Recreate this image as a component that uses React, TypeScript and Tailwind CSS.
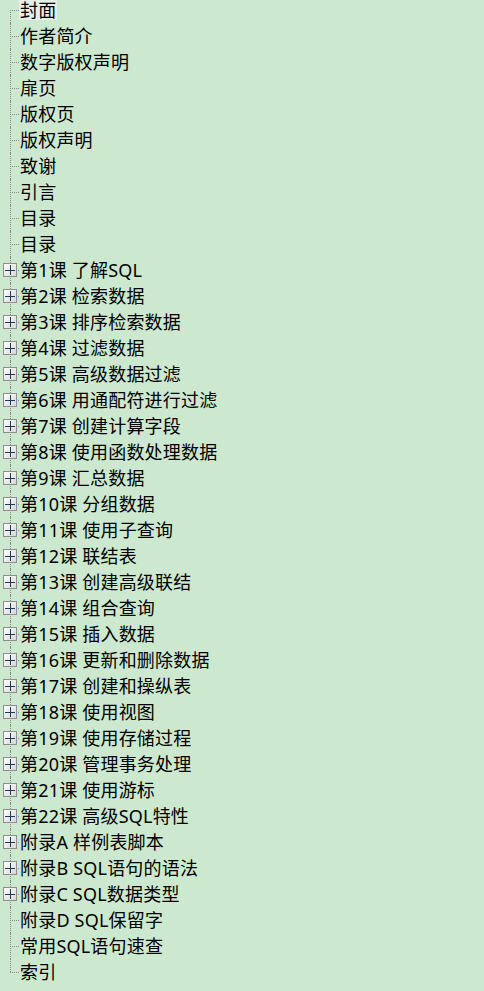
const items: { label: string; expandable?: boolean }[] = [
  { label: "封面" },
  { label: "作者简介" },
  { label: "数字版权声明" },
  { label: "扉页" },
  { label: "版权页" },
  { label: "版权声明" },
  { label: "致谢" },
  { label: "引言" },
  { label: "目录" },
  { label: "目录" },
  { label: "第1课 了解SQL", expandable: true },
  { label: "第2课 检索数据", expandable: true },
  { label: "第3课 排序检索数据", expandable: true },
  { label: "第4课 过滤数据", expandable: true },
  { label: "第5课 高级数据过滤", expandable: true },
  { label: "第6课 用通配符进行过滤", expandable: true },
  { label: "第7课 创建计算字段", expandable: true },
  { label: "第8课 使用函数处理数据", expandable: true },
  { label: "第9课 汇总数据", expandable: true },
  { label: "第10课 分组数据", expandable: true },
  { label: "第11课 使用子查询", expandable: true },
  { label: "第12课 联结表", expandable: true },
  { label: "第13课 创建高级联结", expandable: true },
  { label: "第14课 组合查询", expandable: true },
  { label: "第15课 插入数据", expandable: true },
  { label: "第16课 更新和删除数据", expandable: true },
  { label: "第17课 创建和操纵表", expandable: true },
  { label: "第18课 使用视图", expandable: true },
  { label: "第19课 使用存储过程", expandable: true },
  { label: "第20课 管理事务处理", expandable: true },
  { label: "第21课 使用游标", expandable: true },
  { label: "第22课 高级SQL特性", expandable: true },
  { label: "附录A 样例表脚本", expandable: true },
  { label: "附录B SQL语句的语法", expandable: true },
  { label: "附录C SQL数据类型", expandable: true },
  { label: "附录D SQL保留字" },
  { label: "常用SQL语句速查" },
  { label: "索引" },
];

function TreeRow({ label, expandable, first, last, selected }: { label: string; expandable?: boolean; first: boolean; last: boolean; selected: boolean }) {
  return (
    <div className="flex h-[26px] items-center">
      <div className="relative h-full w-[20px] shrink-0">
        {/* vertical guide */}
        <span
          className={
            first
              ? "absolute left-[10px] top-[13px] bottom-0 border-l border-dotted border-[#8a8a8a]"
              : last
              ? "absolute left-[10px] top-0 h-[13px] border-l border-dotted border-[#8a8a8a]"
              : "absolute left-[10px] top-0 bottom-0 border-l border-dotted border-[#8a8a8a]"
          }
        />
        {/* horizontal guide */}
        <span className="absolute left-[10px] top-[13px] w-[9px] border-t border-dotted border-[#8a8a8a]" />
        {expandable && (
          <span className="absolute left-[3px] top-[6px] flex h-[14px] w-[14px] items-center justify-center border border-[#8e8f8f] bg-gradient-to-br from-white to-[#d6d6d6]">
            <svg width="10" height="10" viewBox="0 0 10 10">
              <path d="M0 5.5H10M5.5 0V10" stroke="#1e395b" strokeWidth="1" />
            </svg>
          </span>
        )}
      </div>
      <span
        className={
          selected
            ? "ml-[-1px] bg-[#e6eee8] px-[1px] text-[18px] leading-[20px] tracking-[0.2px] text-black"
            : "ml-[-1px] px-[1px] text-[18px] leading-[22px] tracking-[0.2px] text-black"
        }
      >
        {label}
      </span>
    </div>
  );
}

export default function App() {
  return (
    <div
      className="h-[991px] w-[484px] overflow-hidden bg-[#cce8cf]"
      style={{ fontFamily: '"Noto Sans", "Noto Sans CJK SC", sans-serif' }}
    >
      <div className="-mt-[3px] flex flex-col">
        {items.map((it, i) => (
          <TreeRow
            key={i}
            label={it.label}
            expandable={it.expandable}
            first={i === 0}
            last={i === items.length - 1}
            selected={i === 0}
          />
        ))}
      </div>
    </div>
  );
}
